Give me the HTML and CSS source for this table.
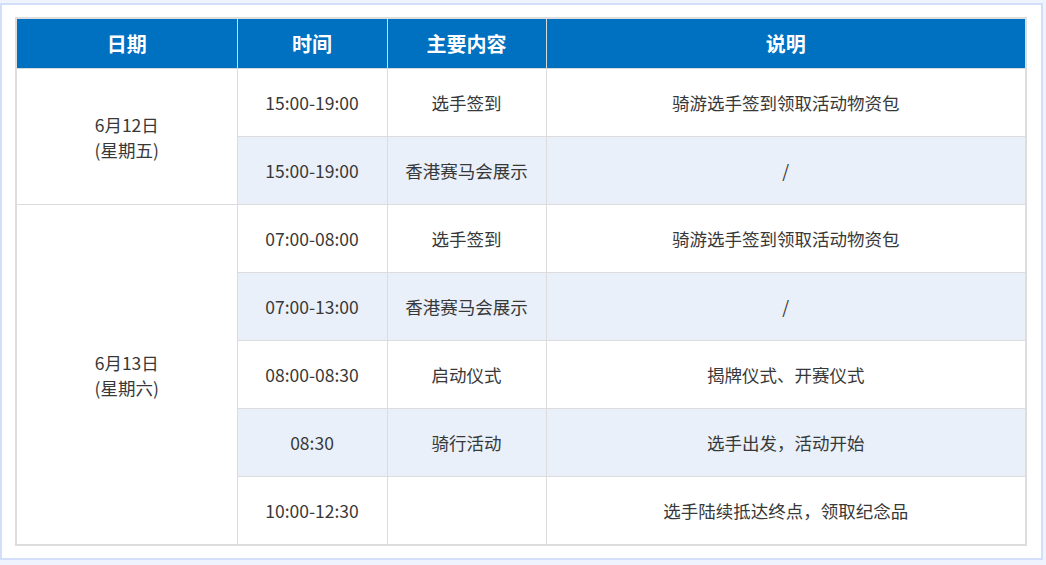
FILE: index.html
```html
<!DOCTYPE html>
<html lang="zh-CN">
<head>
<meta charset="utf-8">
<title>日程安排</title>
<link rel="stylesheet" href="styles.css">
</head>
<body>
<div class="panel">
  <table class="schedule">
    <colgroup>
      <col class="c-date">
      <col class="c-time">
      <col class="c-item">
      <col class="c-desc">
    </colgroup>
    <thead>
      <tr>
        <th>日期</th>
        <th>时间</th>
        <th>主要内容</th>
        <th>说明</th>
      </tr>
    </thead>
    <tbody>
      <tr>
        <td class="date" rowspan="2">6月12日<br>(星期五)</td>
        <td>15:00-19:00</td>
        <td>选手签到</td>
        <td>骑游选手签到领取活动物资包</td>
      </tr>
      <tr class="alt">
        <td>15:00-19:00</td>
        <td>香港赛马会展示</td>
        <td>/</td>
      </tr>
      <tr>
        <td class="date" rowspan="5">6月13日<br>(星期六)</td>
        <td>07:00-08:00</td>
        <td>选手签到</td>
        <td>骑游选手签到领取活动物资包</td>
      </tr>
      <tr class="alt">
        <td>07:00-13:00</td>
        <td>香港赛马会展示</td>
        <td>/</td>
      </tr>
      <tr>
        <td>08:00-08:30</td>
        <td>启动仪式</td>
        <td>揭牌仪式、开赛仪式</td>
      </tr>
      <tr class="alt">
        <td>08:30</td>
        <td>骑行活动</td>
        <td>选手出发，活动开始</td>
      </tr>
      <tr>
        <td>10:00-12:30</td>
        <td></td>
        <td>选手陆续抵达终点，领取纪念品</td>
      </tr>
    </tbody>
  </table>
</div>
</body>
</html>
```

FILE: styles.css
```css
html, body {
  margin: 0;
  padding: 0;
}
body {
  background: #eef3fd;
  width: 1046px;
  height: 565px;
  overflow: hidden;
  font-family: "Noto Sans CJK SC", "Noto Sans", sans-serif;
  padding-top: 3px;
  box-sizing: border-box;
}
.panel {
  width: 1043px;
  height: 557px;
  box-sizing: border-box;
  background: #ffffff;
  border: 2px solid #d3dffa;
  padding: 12px 16px 12px 13px;
}
.schedule {
  width: 1010px;
  border-collapse: collapse;
  table-layout: fixed;
  border: 2px solid #dddddd;
}
.c-date { width: 221px; }
.c-time { width: 150px; }
.c-item { width: 159px; }
.c-desc { width: 480px; }
.schedule th {
  height: 49px;
  padding: 0;
  background: #0070c0;
  color: #ffffff;
  font-size: 20px;
  font-weight: 700;
  border: 1px solid #d9d9d9;
  text-align: center;
  vertical-align: middle;
}
.schedule td {
  height: 67px;
  padding: 0;
  border: 1px solid #dcdcdc;
  color: #383838;
  font-size: 17.5px;
  text-align: center;
  vertical-align: middle;
  background: #ffffff;
}
.schedule tr.alt td {
  background: #e9f0f9;
}
.schedule td.date {
  line-height: 25px;
  background: #ffffff;
}
```
